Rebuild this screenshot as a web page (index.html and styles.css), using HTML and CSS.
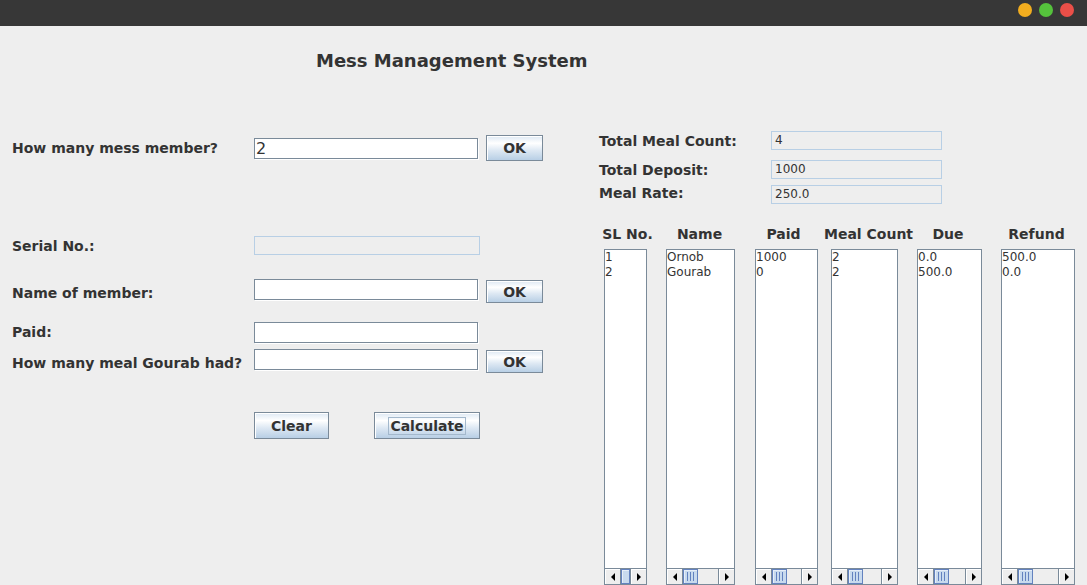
FILE: index.html
```html
<!DOCTYPE html>
<html>
<head>
<meta charset="utf-8">
<title>Mess Management System</title>
<link rel="stylesheet" href="styles.css">
</head>
<body>
<div class="titlebar">
  <span class="dot dot-yellow"></span>
  <span class="dot dot-green"></span>
  <span class="dot dot-red"></span>
</div>
<div class="main">
  <div class="left">
    <div class="title">Mess Management System</div>

    <div class="row row-members">
      <label class="lbl">How many mess member?</label>
      <div class="field field-big">2</div>
      <button class="btn btn-ok">OK</button>
    </div>

    <div class="row row-serial">
      <label class="lbl">Serial No.:</label>
      <div class="field field-disabled field-serial"></div>
    </div>

    <div class="row row-name">
      <label class="lbl lbl-low">Name of member:</label>
      <div class="field"></div>
      <button class="btn btn-ok btn-low">OK</button>
    </div>

    <div class="row row-paid">
      <label class="lbl">Paid:</label>
      <div class="field"></div>
    </div>

    <div class="row row-meal">
      <label class="lbl">How many meal Gourab had?</label>
      <div class="field"></div>
      <button class="btn btn-ok btn-low">OK</button>
    </div>

    <div class="row row-actions">
      <button class="btn btn-clear">Clear</button>
      <button class="btn btn-calc"><span class="focus">Calculate</span></button>
    </div>
  </div>

  <div class="right">
    <div class="stat stat-1">
      <label class="lbl lbl-stat">Total Meal Count:</label>
      <div class="field field-disabled field-stat">4</div>
    </div>
    <div class="stat stat-2">
      <label class="lbl lbl-stat">Total Deposit:</label>
      <div class="field field-disabled field-stat">1000</div>
    </div>
    <div class="stat stat-3">
      <label class="lbl lbl-stat">Meal Rate:</label>
      <div class="field field-disabled field-stat">250.0</div>
    </div>

    <div class="table">
      <div class="col col-sl">
        <div class="head">SL No.</div>
        <div class="list">
          <div class="items"><div>1</div><div>2</div></div>
          <div class="sb">
            <span class="arr arr-l"><i class="tri tri-l"></i></span>
            <span class="track"><span class="thumb thumb-full"></span></span>
            <span class="arr arr-r"><i class="tri tri-r"></i></span>
          </div>
        </div>
      </div>
      <div class="col col-name">
        <div class="head">Name</div>
        <div class="list">
          <div class="items"><div>Ornob</div><div>Gourab</div></div>
          <div class="sb">
            <span class="arr arr-l"><i class="tri tri-l"></i></span>
            <span class="track"><span class="thumb"><i></i><i></i><i></i></span></span>
            <span class="arr arr-r"><i class="tri tri-r"></i></span>
          </div>
        </div>
      </div>
      <div class="col col-paid">
        <div class="head">Paid</div>
        <div class="list">
          <div class="items"><div>1000</div><div>0</div></div>
          <div class="sb">
            <span class="arr arr-l"><i class="tri tri-l"></i></span>
            <span class="track"><span class="thumb"><i></i><i></i><i></i></span></span>
            <span class="arr arr-r"><i class="tri tri-r"></i></span>
          </div>
        </div>
      </div>
      <div class="col col-meal">
        <div class="head">Meal Count</div>
        <div class="list">
          <div class="items"><div>2</div><div>2</div></div>
          <div class="sb">
            <span class="arr arr-l"><i class="tri tri-l"></i></span>
            <span class="track"><span class="thumb"><i></i><i></i><i></i></span></span>
            <span class="arr arr-r"><i class="tri tri-r"></i></span>
          </div>
        </div>
      </div>
      <div class="col col-due">
        <div class="head">Due</div>
        <div class="list">
          <div class="items"><div>0.0</div><div>500.0</div></div>
          <div class="sb">
            <span class="arr arr-l"><i class="tri tri-l"></i></span>
            <span class="track"><span class="thumb"><i></i><i></i><i></i></span></span>
            <span class="arr arr-r"><i class="tri tri-r"></i></span>
          </div>
        </div>
      </div>
      <div class="col col-refund">
        <div class="head">Refund</div>
        <div class="list">
          <div class="items"><div>500.0</div><div>0.0</div></div>
          <div class="sb">
            <span class="arr arr-l"><i class="tri tri-l"></i></span>
            <span class="track"><span class="thumb"><i></i><i></i><i></i></span></span>
            <span class="arr arr-r"><i class="tri tri-r"></i></span>
          </div>
        </div>
      </div>
    </div>
  </div>
</div>
</body>
</html>
```
FILE: styles.css
```css
* { box-sizing: border-box; }
html, body {
  margin: 0;
  padding: 0;
  height: 585px;
  overflow: hidden;
  background: #eeeeee;
  font-family: "DejaVu Sans", sans-serif;
  color: #333333;
}

.titlebar {
  height: 26px;
  background: #373737;
  display: flex;
  justify-content: flex-end;
  align-items: flex-start;
  gap: 7px;
  padding: 3px 13px 0 0;
}
.dot {
  width: 14px;
  height: 14px;
  border-radius: 50%;
  display: block;
}
.dot-yellow { background: #f2ad1f; }
.dot-green { background: #55c23c; }
.dot-red { background: #ea4f48; }

.main {
  display: flex;
  align-items: flex-start;
}

.left {
  width: 599px;
  padding-left: 12px;
  display: flex;
  flex-direction: column;
}
.title {
  margin: 24px 0 0 304px;
  font-size: 18px;
  font-weight: bold;
  line-height: 22px;
  white-space: nowrap;
}

.row {
  display: flex;
  align-items: center;
}
.row-members { margin-top: 63px; height: 26px; }
.row-serial { margin-top: 75px; height: 19px; }
.row-name { margin-top: 24px; height: 24px; align-items: flex-start; }
.row-paid { margin-top: 18px; height: 22px; }
.row-meal { margin-top: 6px; height: 24px; align-items: flex-start; }
.row-actions { margin-top: 39px; height: 27px; padding-left: 242px; gap: 45px; }

.lbl {
  width: 242px;
  font-size: 14px;
  font-weight: bold;
  white-space: nowrap;
  flex: none;
}
.row-name .lbl, .row-meal .lbl { align-self: center; margin-top: 4px; }

.field {
  width: 224px;
  height: 21px;
  background: #ffffff;
  border: 1px solid #7a8a99;
  box-shadow: 1px 1px 0 #ffffff;
  flex: none;
  font-size: 12px;
  line-height: 19px;
  padding-left: 1px;
}
.field-big {
  font-size: 16px;
  line-height: 19px;
}
.field-disabled {
  background: #eeeeee;
  border-color: #b8cfe5;
  box-shadow: none;
}
.field-serial {
  width: 226px;
  height: 19px;
}

.btn {
  flex: none;
  border: 1px solid #7a8a99;
  background: linear-gradient(#dde8f3 0%, #ffffff 30%, #dde8f3 60%, #b8cfe5 100%);
  box-shadow: inset 1px 1px 0 #ffffff;
  font-family: "DejaVu Sans", sans-serif;
  font-size: 14px;
  font-weight: bold;
  color: #333333;
  padding: 0;
  display: flex;
  align-items: center;
  justify-content: center;
}
.btn-ok {
  width: 57px;
  height: 26px;
  margin-left: 8px;
}
.btn-low {
  height: 23px;
  margin-top: 1px;
}
.btn-clear { width: 75px; height: 27px; }
.btn-calc { width: 106px; height: 27px; }
.focus {
  border: 1px solid #a3b8cc;
  padding: 0 1px;
  line-height: 16px;
}

.right {
  margin-top: 105px;
  display: flex;
  flex-direction: column;
}
.stat {
  display: flex;
  align-items: center;
  height: 19px;
}
.stat-2 { margin-top: 10px; }
.stat-3 { margin-top: 6px; }
.lbl-stat { width: 172px; }
.stat-3 .lbl-stat { margin-top: -3px; }
.field-stat {
  width: 171px;
  height: 19px;
  font-size: 12px;
  line-height: 17px;
  padding-left: 3px;
}

.table {
  margin-top: 22px;
  margin-left: 5px;
  display: flex;
  align-items: flex-start;
}
.col {
  display: flex;
  flex-direction: column;
  flex: none;
}
.col-sl { width: 43px; }
.col-name { width: 69px; margin-left: 19px; }
.col-paid { width: 63px; margin-left: 20px; }
.col-meal { width: 67px; margin-left: 13px; }
.col-due { width: 65px; margin-left: 19px; }
.col-refund { width: 74px; margin-left: 19px; }

.head {
  height: 16px;
  display: flex;
  justify-content: center;
  white-space: nowrap;
  font-size: 14px;
  font-weight: bold;
  line-height: 16px;
}
.col-sl .head { margin-left: 4px; }
.col-name .head { margin-right: 2px; }
.col-paid .head { margin-right: 6px; }
.col-meal .head { margin-left: 8px; }
.col-due .head { margin-right: 3px; }
.col-refund .head { margin-right: 3px; }

.list {
  margin-top: 7px;
  height: 336px;
  background: #ffffff;
  border: 1px solid #7a8a99;
  display: flex;
  flex-direction: column;
}
.items {
  flex: 1;
  font-size: 12px;
  line-height: 15px;
  color: #333333;
  white-space: nowrap;
  overflow: hidden;
}

.sb {
  height: 16px;
  display: flex;
  border-top: 1px solid #7a8a99;
  background: #eeeeee;
}
.arr {
  width: 16px;
  flex: none;
  display: flex;
  align-items: center;
  justify-content: center;
  background: #eeeeee;
  box-shadow: inset 1px 1px 0 #ffffff;
}
.arr-l { border-right: 1px solid #7a8a99; }
.arr-r { border-left: 1px solid #7a8a99; }
.tri {
  display: block;
  width: 0;
  height: 0;
  border-top: 4px solid transparent;
  border-bottom: 4px solid transparent;
}
.tri-l { border-right: 4px solid #000000; }
.tri-r { border-left: 4px solid #000000; }

.track {
  flex: 1;
  display: flex;
  background: #eeeeee;
}
.thumb {
  width: 15px;
  flex: none;
  background: #c8daee;
  border: 1px solid #6382bf;
  box-shadow: inset 1px 1px 0 #e6eef8;
  display: flex;
  justify-content: center;
  align-items: center;
  gap: 2px;
}
.thumb i {
  display: block;
  width: 1px;
  height: 9px;
  background: #6382bf;
}
.thumb-full { width: auto; flex: 1; }
```
